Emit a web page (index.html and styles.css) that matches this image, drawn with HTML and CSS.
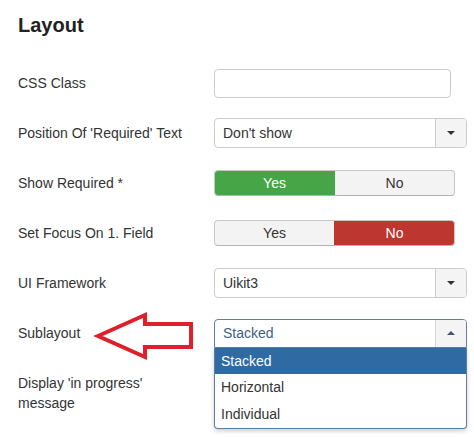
FILE: index.html
```html
<!DOCTYPE html>
<html>
<head>
<meta charset="utf-8">
<link rel="stylesheet" href="styles.css">
</head>
<body>
<div class="page">
  <h2 class="title">Layout</h2>
  <div class="form">
    <div class="row">
      <div class="label">CSS Class</div>
      <div class="input"></div>
    </div>
    <div class="row">
      <div class="label">Position Of 'Required' Text</div>
      <div class="select"><span class="value">Don't show</span><span class="btn"><i class="caret-down"></i></span></div>
    </div>
    <div class="row">
      <div class="label">Show Required *</div>
      <div class="toggle"><span class="opt yes-on">Yes</span><span class="opt">No</span></div>
    </div>
    <div class="row">
      <div class="label">Set Focus On 1. Field</div>
      <div class="toggle"><span class="opt">Yes</span><span class="opt no-on">No</span></div>
    </div>
    <div class="row">
      <div class="label">UI Framework</div>
      <div class="select"><span class="value">Uikit3</span><span class="btn"><i class="caret-down"></i></span></div>
    </div>
    <div class="row">
      <div class="label">Sublayout</div>
      <div class="dropwrap">
        <div class="select open"><span class="value">Stacked</span><span class="btn"><i class="caret-up"></i></span></div>
        <ul class="menu">
          <li class="active">Stacked</li>
          <li>Horizontal</li>
          <li>Individual</li>
        </ul>
      </div>
    </div>
    <div class="row top">
      <div class="label">Display 'in progress'<br>message</div>
    </div>
  </div>
  <svg class="arrow" width="110" height="60" viewBox="90 305 110 60">
    <polygon points="98,336 145,315 145,324 191,324 191,347 145,347 145,357" fill="none" stroke="#df1f2a" stroke-width="4" stroke-linejoin="miter"/>
  </svg>
</div>
</body>
</html>
```

FILE: styles.css
```css
html, body {
  margin: 0;
  padding: 0;
  background: #fff;
}
body {
  font-family: "Liberation Sans", Arial, sans-serif;
  font-size: 14px;
  color: #333;
}
.page {
  position: relative;
  width: 474px;
  height: 437px;
  padding-left: 18px;
  box-sizing: border-box;
  overflow: hidden;
}
.title {
  margin: 0;
  padding-top: 13px;
  font-size: 20px;
  line-height: 24px;
  font-weight: bold;
  color: #222;
  height: 45px;
}
.row {
  display: flex;
  align-items: center;
  height: 50px;
}
.row.top {
  align-items: flex-start;
}
.row.top .label {
  padding-top: 15px;
}
.label {
  width: 196px;
  flex: none;
  line-height: 20px;
}
.input {
  width: 237px;
  height: 29px;
  box-sizing: border-box;
  border: 1px solid #ccc;
  border-radius: 4px;
  background: #fff;
}
.select {
  display: flex;
  width: 253px;
  height: 30px;
  box-sizing: border-box;
  border: 1px solid #ccc;
  border-radius: 4px;
  background: #fff;
  overflow: hidden;
}
.select .value {
  flex: 1;
  padding-left: 8px;
  line-height: 28px;
  color: #333;
}
.select .btn {
  width: 30px;
  flex: none;
  border-left: 1px solid #ccc;
  background: #f4f4f4;
  display: flex;
  align-items: center;
  justify-content: center;
}
.caret-down {
  width: 0;
  height: 0;
  border-left: 4px solid transparent;
  border-right: 4px solid transparent;
  border-top: 4px solid #333;
}
.caret-up {
  width: 0;
  height: 0;
  border-left: 4px solid transparent;
  border-right: 4px solid transparent;
  border-bottom: 4px solid #3b5674;
}
.toggle {
  display: flex;
  width: 241px;
  height: 26px;
  box-sizing: border-box;
  border: 1px solid #c8c8c8;
  border-bottom-color: #b3b3b3;
  border-radius: 4px;
  overflow: hidden;
  background: #f3f3f3;
}
.opt {
  flex: 1;
  text-align: center;
  line-height: 24px;
  color: #333;
}
.opt + .opt {
  border-left: 1px solid #d0d0d0;
}
.opt.yes-on {
  background: #46a546;
  color: #fff;
}
.opt.no-on {
  background: #bd362f;
  color: #fff;
  border-left-color: #bd362f;
}
.toggle .yes-on + .opt {
  border-left-color: #46a546;
}
.dropwrap {
  position: relative;
}
.select.open {
  border-color: #5d7fa6;
  border-radius: 4px 4px 0 0;
  height: 29px;
}
.select.open .value {
  color: #3d5f86;
  line-height: 27px;
}
.select.open .btn {
  border-left-color: #d8d8d8;
}
.menu {
  position: absolute;
  left: 0;
  top: 29px;
  width: 253px;
  box-sizing: border-box;
  margin: 0;
  padding: 0;
  list-style: none;
  background: #fff;
  border: 1px solid #5d7fa6;
  border-top: none;
  border-radius: 0 0 4px 4px;
  box-shadow: 0 2px 4px rgba(0,0,0,0.2);
  z-index: 2;
}
.menu li {
  height: 27px;
  line-height: 27px;
  padding-left: 6px;
  color: #333;
}
.menu li.active {
  height: 26px;
  line-height: 26px;
  background: #2f6aa3;
  color: #fff;
}
.arrow {
  position: absolute;
  left: 90px;
  top: 305px;
}
```
